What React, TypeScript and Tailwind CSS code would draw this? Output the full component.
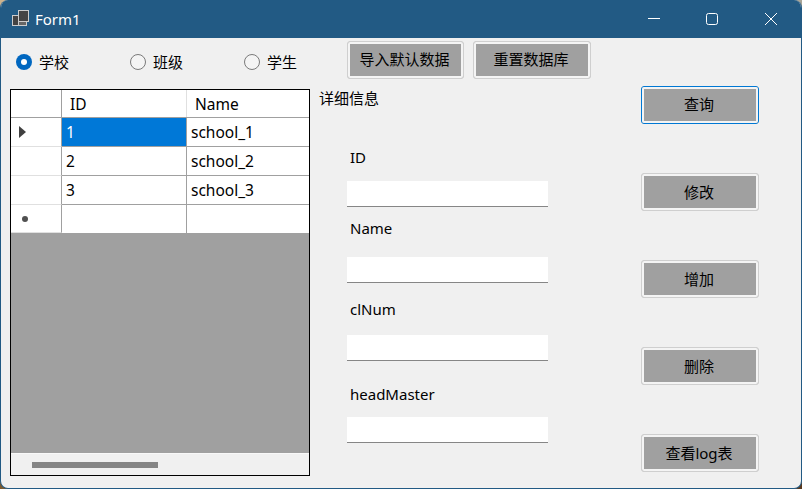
const font = "font-['Noto_Sans','Noto_Sans_CJK_SC',sans-serif]";

const rows = [
  { id: "1", name: "school_1" },
  { id: "2", name: "school_2" },
  { id: "3", name: "school_3" },
];

const fields = [
  { label: "ID", rowClass: "h-[69px]", labelClass: "pt-[5px] pb-[14px]" },
  { label: "Name", rowClass: "h-[76px]", labelClass: "pt-[7px] pb-[19px]" },
  { label: "clNum", rowClass: "h-[78px]", labelClass: "pt-[12px] pb-[16px]" },
  { label: "headMaster", rowClass: "h-[82px]", labelClass: "pt-[19px] pb-[13px]" },
];

function WinButton({ label, active, className }: { label: string; active?: boolean; className: string }) {
  return (
    <button
      className={`flex h-[38px] items-center justify-center rounded-[3px] border-[1px] bg-[#a0a0a0] pr-[2px] text-[15px] leading-none text-black outline-2 -outline-offset-3 outline-[#f4f4f4] ${
        active ? "border-[#0078d4]" : "border-[#cfcfcf]"
      } ${className}`}
    >
      {label}
    </button>
  );
}

function Radio({ label, checked }: { label: string; checked?: boolean }) {
  return (
    <div className="flex items-center gap-[7px]">
      {checked ? (
        <span className="flex h-4 w-4 items-center justify-center rounded-full bg-[#0067c0]">
          <span className="h-[6px] w-[6px] rounded-full bg-white" />
        </span>
      ) : (
        <span className="h-4 w-4 rounded-full border border-[#7a7a7a] bg-[#f4f4f4]" />
      )}
      <span className="text-[15px] leading-none text-black">{label}</span>
    </div>
  );
}

function DataGrid() {
  return (
    <div className="flex h-[387px] w-[300px] flex-col border border-black bg-[#a0a0a0] text-[15.5px] text-black">
      <div className="flex h-[28px] border-b border-[#a0a0a0] bg-white">
        <div className="w-[51px] border-r border-[#a0a0a0]" />
        <div className="flex w-[125px] items-center border-r border-[#e0e0e0] pt-[2px] pl-[8px]">ID</div>
        <div className="flex flex-1 items-center pt-[2px] pl-[8px]">Name</div>
      </div>
      {rows.map((row, i) => (
        <div key={row.id} className="flex h-[29px] bg-white">
          <div className="flex w-[51px] items-center border-r border-b border-r-[#a0a0a0] border-b-[#e0e0e0] pl-[8px]">
            {i === 0 && (
              <svg width="7" height="12" viewBox="0 0 7 12">
                <path d="M0 0 L7 6 L0 12 Z" fill="#404040" />
              </svg>
            )}
          </div>
          <div
            className={`flex w-[125px] items-center border-r border-b border-[#a0a0a0] pt-[2px] pl-[4px] ${
              i === 0 ? "bg-[#0078d7] text-white" : ""
            }`}
          >
            {row.id}
          </div>
          <div className="flex flex-1 items-center border-b border-[#a0a0a0] pt-[2px] pl-[4px]">{row.name}</div>
        </div>
      ))}
      <div className="flex h-[28px] bg-white">
        <div className="flex w-[51px] items-center border-r border-b border-r-[#a0a0a0] border-b-[#e0e0e0] pl-[11px]">
          <span className="h-[6px] w-[6px] rounded-full bg-[#505050]" />
        </div>
        <div className="w-[125px] border-r border-[#a0a0a0]" />
        <div className="flex-1" />
      </div>
      <div className="flex-1" />
      <div className="flex h-[22px] items-center border-t border-[#f8f8f8] bg-[#f0f0f0] pl-[21px]">
        <div className="h-[6px] w-[126px] bg-[#858585]" />
      </div>
    </div>
  );
}

export default function App() {
  return (
    <div
      className={`h-[489px] w-[802px] overflow-hidden bg-[conic-gradient(#a9a598_0_25%,#5a3a20_25%_50%,#7a5a30_50%_75%,#cdb28c_75%_100%)] ${font}`}
    >
      <div className="flex h-full w-full flex-col overflow-hidden rounded-[8px] border-x border-b border-[#225a84] bg-[#f0f0f0]">
        <header className="flex h-[38px] shrink-0 items-center bg-[#225a84] text-white">
          <svg className="ml-[10px]" width="18" height="18" viewBox="0 0 18 18">
            <rect x="1.5" y="5.5" width="6" height="10" fill="#444" stroke="#ccc" />
            <rect x="7.5" y="0.5" width="10" height="11" fill="#444" stroke="#ccc" />
            <rect x="7.5" y="11.5" width="8" height="4" fill="#666" stroke="#ccc" />
          </svg>
          <span className="ml-[6px] text-[15px]">Form1</span>
          <div className="ml-auto flex items-center">
            <svg width="14" height="14" viewBox="0 0 14 14" className="mr-[44px]">
              <path d="M1 6.5 H13" stroke="white" />
            </svg>
            <svg width="14" height="14" viewBox="0 0 14 14" className="mr-[45px]">
              <rect x="1.5" y="1.5" width="11" height="11" rx="2" fill="none" stroke="white" />
            </svg>
            <svg width="14" height="14" viewBox="0 0 14 14" className="mr-[23px]">
              <path d="M1 1 L13 13 M13 1 L1 13" stroke="white" />
            </svg>
          </div>
        </header>

        <div className="flex h-[48px] shrink-0 pl-[15px]">
          <div className="flex h-[48px] w-[331px] shrink-0 items-center gap-[61px]">
            <Radio label="学校" checked />
            <Radio label="班级" />
            <Radio label="学生" />
          </div>
          <div className="flex gap-[9px] pt-[3px]">
            <WinButton label="导入默认数据" className="w-[117px] pb-[1px]" />
            <WinButton label="重置数据库" className="w-[118px] pb-[1px]" />
          </div>
        </div>

        <div className="flex flex-1">
          <div className="ml-[9px] pt-[3px]">
            <DataGrid />
          </div>
          <div className="ml-[9px] w-[322px] pt-[2px]">
            <div className="h-[54px] text-[15px] leading-[20px] text-black">详细信息</div>
            {fields.map((field) => (
              <div key={field.label} className={`${field.rowClass} pl-[28px]`}>
                <div className={`pl-[3px] text-[15px] leading-[20px] text-black ${field.labelClass}`}>{field.label}</div>
                <div className="h-[26px] w-[201px] border-b border-[#868686] bg-white" />
              </div>
            ))}
          </div>
          <div className="flex flex-col gap-[49px]">
            <WinButton label="查询" active className="w-[118px] pb-[1px]" />
            <WinButton label="修改" className="w-[118px]" />
            <WinButton label="增加" className="w-[118px]" />
            <WinButton label="删除" className="w-[118px]" />
            <WinButton label="查看log表" className="w-[118px]" />
          </div>
        </div>
      </div>
    </div>
  );
}
